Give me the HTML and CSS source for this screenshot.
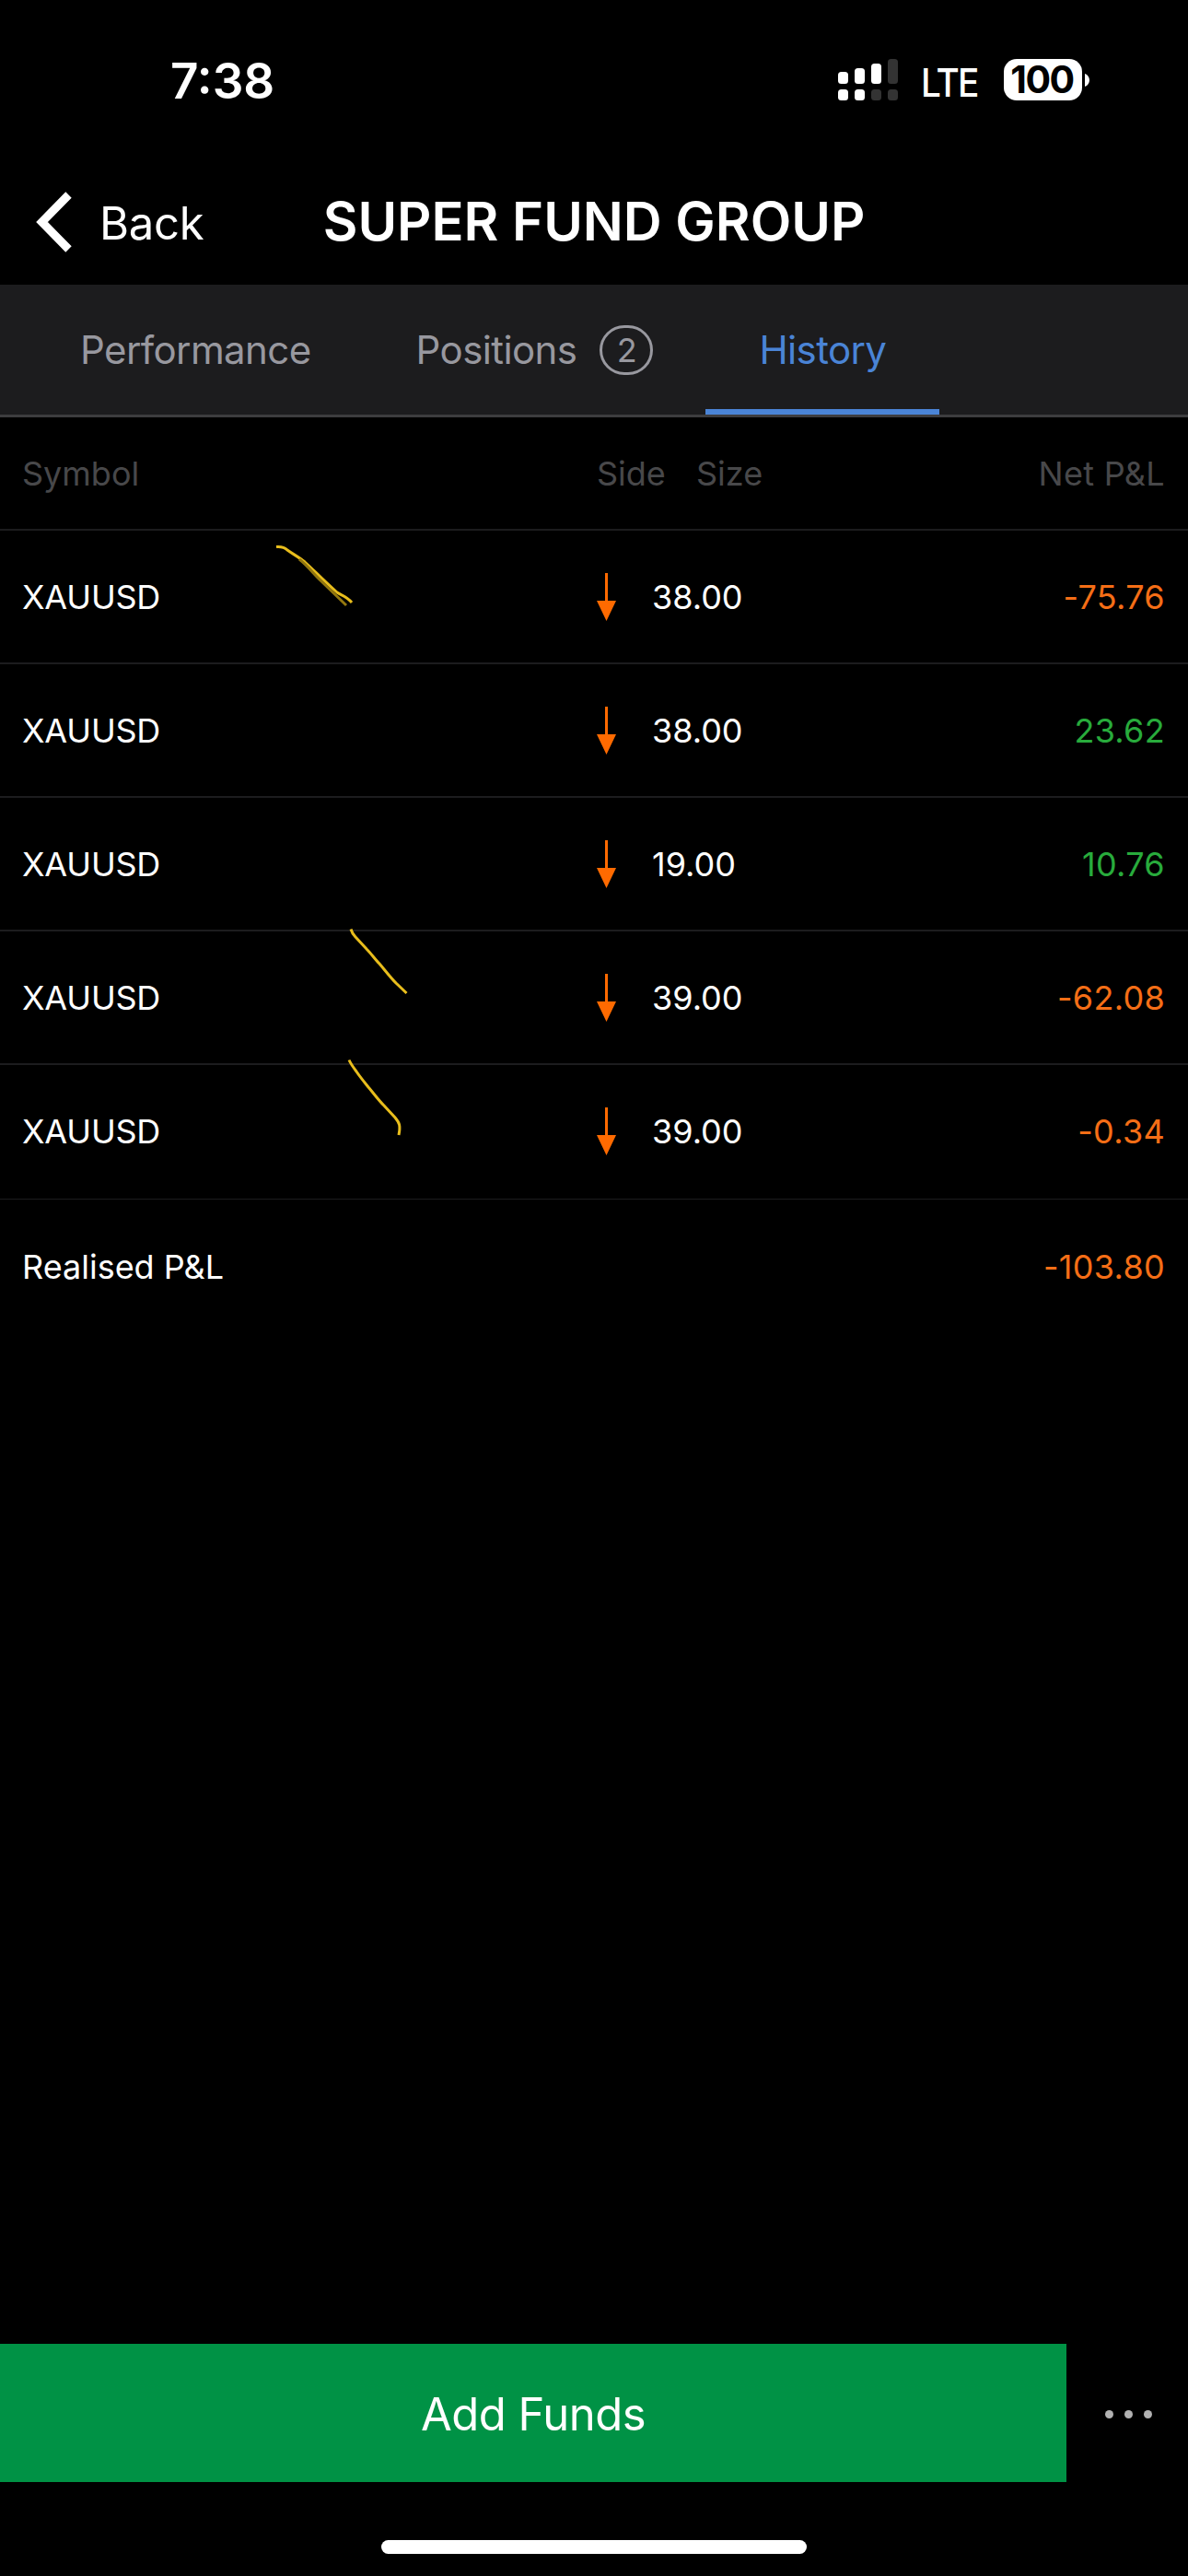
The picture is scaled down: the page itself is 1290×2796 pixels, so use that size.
FILE: index.html
```html
<!DOCTYPE html>
<html lang="en">
<head>
    <meta charset="UTF-8">
    <meta name="viewport" content="width=device-width, initial-scale=1.0">
    <title>Super Fund Group</title>
    <link rel="stylesheet" href="styles.css">
</head>
<body>

    <div class="screen">
        <div class="status-bar">
            <span class="time">7:38</span>
            <svg class="signal" width="65" height="45" viewBox="0 0 65 45">
                <g fill="#fff">
                    <rect x="0" y="14" width="11" height="13" rx="3.5"/>
                    <rect x="18" y="10" width="11" height="17" rx="3.5"/>
                    <rect x="36" y="5" width="11" height="22" rx="3.5"/>
                    <rect x="0" y="33" width="11" height="12" rx="3.5"/>
                    <rect x="18" y="33" width="11" height="12" rx="3.5"/>
                </g>
                <g fill="#333">
                    <rect x="54" y="0" width="11" height="27" rx="3.5"/>
                    <rect x="36" y="33" width="11" height="12" rx="3.5"/>
                    <rect x="54" y="33" width="11" height="12" rx="3.5"/>
                </g>
            </svg>
            <span class="network">LTE</span>
            <div class="battery">100</div>
            <svg class="battery-tip" width="5" height="14" viewBox="0 0 5 14">
                <path d="M0 0C3 1 5 4 5 7S3 13 0 14Z" fill="#fff"/>
            </svg>
        </div>

        <header class="nav-bar">
            <a class="back">
                <svg width="40" height="66" viewBox="0 0 40 66">
                    <path d="M35.5 3.5L6.5 33L35.5 62.5" fill="none" stroke="#fff" stroke-width="9"/>
                </svg>
                <span>Back</span>
            </a>
            <h1>SUPER FUND GROUP</h1>
        </header>

        <nav class="tabs">
            <a class="tab">Performance</a>
            <a class="tab">Positions <span class="badge">2</span></a>
            <a class="tab active">History</a>
        </nav>

        <main class="history">
            <div class="row head">
                <span>Symbol</span>
                <span>Side</span>
                <span>Size</span>
                <span class="pnl">Net P&amp;L</span>
            </div>
            <div class="row">
                <span class="symbol">XAUUSD</span>
                <svg class="arrow" viewBox="0 0 21 52"><path d="M9 0h3v30h9L10.500 52L0 30h9z"/></svg>
                <span class="size">38.00</span>
                <span class="pnl loss">-75.76</span>
            </div>
            <div class="row">
                <span class="symbol">XAUUSD</span>
                <svg class="arrow" viewBox="0 0 21 52"><path d="M9 0h3v30h9L10.500 52L0 30h9z"/></svg>
                <span class="size">38.00</span>
                <span class="pnl gain">23.62</span>
            </div>
            <div class="row">
                <span class="symbol">XAUUSD</span>
                <svg class="arrow" viewBox="0 0 21 52"><path d="M9 0h3v30h9L10.500 52L0 30h9z"/></svg>
                <span class="size">19.00</span>
                <span class="pnl gain">10.76</span>
            </div>
            <div class="row">
                <span class="symbol">XAUUSD</span>
                <svg class="arrow" viewBox="0 0 21 52"><path d="M9 0h3v30h9L10.500 52L0 30h9z"/></svg>
                <span class="size">39.00</span>
                <span class="pnl loss">-62.08</span>
            </div>
            <div class="row last">
                <span class="symbol">XAUUSD</span>
                <svg class="arrow" viewBox="0 0 21 52"><path d="M9 0h3v30h9L10.500 52L0 30h9z"/></svg>
                <span class="size">39.00</span>
                <span class="pnl loss">-0.34</span>
            </div>
            <div class="row total">
                <span class="realised">Realised P&amp;L</span>
                <span class="pnl loss">-103.80</span>
            </div>

            <!-- pen marks over the rows -->
            <svg class="marks" viewBox="290 580 170 670" fill="none" stroke="#e8bd1c" stroke-width="3">
                <path d="M300 593.500C306 593 309 594 312 597C319 602 325 605 331 610C340 618 349 628 366 643C370 646 376 647 382 654"/>
                <path d="M325 607C333 613 340 622 347 629L376 657" stroke="#94780f" stroke-width="3"/>
                <path d="M381 1008.500C382 1012 383 1014 386 1017L398 1030C403 1035 407 1041 412 1046C418 1053 424 1061 430 1067L441.500 1078"/>
                <path d="M379 1150.500C381 1155 384 1159 387 1163C391 1169 396 1175 400 1180C406 1187 411 1194 417 1200L429 1213C434 1219 435 1222 433 1232"/>
            </svg>
        </main>

        <footer class="actions">
            <button class="add-funds">Add Funds</button>
            <div class="more">
                <i></i>
                <i></i>
                <i></i>
            </div>
        </footer>
        <div class="home-indicator"></div>
    </div>

</body>
</html>
```
FILE: styles.css
```css
* {
    box-sizing: border-box;
}
body {
    margin: 0;
    background-color: #000;
    color: #fff;
    font-family: 'Inter', 'Liberation Sans', sans-serif;
}
.screen {
    width: 1290px;
    height: 2796px;
    display: flex;
    flex-direction: column;
}
.status-bar {
    height: 173px;
    padding: 0 107px 0 185px;
    display: flex;
    align-items: center;
}
.time {
    margin: 3px auto 0 0;
    font-size: 53px;
    font-weight: 600;
}
.network {
    width: 62px;
    margin: 5px 28px 0 25px;
    font-size: 43px;
    font-weight: 500;
    letter-spacing: -2px;
    transform: scaleX(0.9);
    transform-origin: left;
}
.battery {
    width: 85px;
    height: 45px;
    padding-right: 2px;
    border-radius: 14px;
    background-color: #fff;
    color: #000;
    font-size: 41px;
    font-weight: 700;
    line-height: 45px;
    text-align: center;
    letter-spacing: -1.5px;
}
.battery-tip {
    margin-left: 3px;
}
.nav-bar {
    height: 136px;
    padding: 0 39px;
    display: grid;
    grid-template-columns: 240px 1fr 240px;
    align-items: center;
}
.back {
    display: flex;
    align-items: center;
    gap: 29px;
    font-size: 49px;
    letter-spacing: -0.3px;
}
.back span {
    padding-top: 3px;
}
.nav-bar h1 {
    margin: 0;
    padding-bottom: 2px;
    font-size: 58px;
    font-weight: 600;
    text-align: center;
    white-space: nowrap;
}
.tabs {
    height: 144px;
    padding-left: 30px;
    display: flex;
    background-color: #1c1c1e;
    border-bottom: 3px solid #3d3d3f;
    color: #98989f;
}
.tab {
    padding: 0 57px;
    display: flex;
    align-items: center;
    font-size: 42px;
    letter-spacing: -0.6px;
}
.tab.active {
    padding: 0 58px;
    color: #4a84d6;
    box-shadow: inset 0 -6px 0 #4a84d6;
}
.badge {
    width: 58px;
    height: 54px;
    margin-left: 25px;
    border: 3px solid #98989f;
    border-radius: 27px;
    font-size: 36px;
    line-height: 48px;
    text-align: center;
}
.history {
    position: relative;
    flex: 1;
}
.row {
    height: 145px;
    padding: 0 25px 0 24px;
    display: grid;
    grid-template-columns: 624px 60px 1fr auto;
    align-items: center;
    border-bottom: 2px solid #1c1c1e;
    font-size: 36px;
}
.row.head {
    height: 123px;
    grid-template-columns: 624px 108px 1fr auto;
    color: #48484a;
}
.row.last {
    height: 146px;
    padding-bottom: 2px;
    border-bottom-width: 1px;
}
.row.total {
    grid-template-columns: 1fr auto;
    border-bottom: none;
}
.symbol {
    letter-spacing: -0.2px;
}
.arrow {
    width: 21px;
    height: 52px;
    fill: #ff6a00;
}
.pnl {
    text-align: right;
    letter-spacing: 0.3px;
}
.loss {
    color: #f56e16;
}
.gain {
    color: #28ab3c;
}
.marks {
    position: absolute;
    left: 290px;
    top: 127px;
    width: 170px;
    height: 670px;
}
.actions {
    height: 150px;
    display: flex;
}
.add-funds {
    width: 1158px;
    padding-top: 3px;
    border: none;
    background-color: #009245;
    color: #fff;
    font-family: inherit;
    font-size: 49px;
    letter-spacing: -0.5px;
}
.more {
    flex: 1;
    padding: 3px 0 0 3px;
    display: flex;
    align-items: center;
    justify-content: center;
    gap: 12px;
}
.more i {
    width: 9px;
    height: 9px;
    border-radius: 50%;
    background-color: #b2b2b2;
}
.home-indicator {
    width: 462px;
    height: 15px;
    margin: 63px auto 24px;
    border-radius: 8px;
    background-color: #fff;
}
```
